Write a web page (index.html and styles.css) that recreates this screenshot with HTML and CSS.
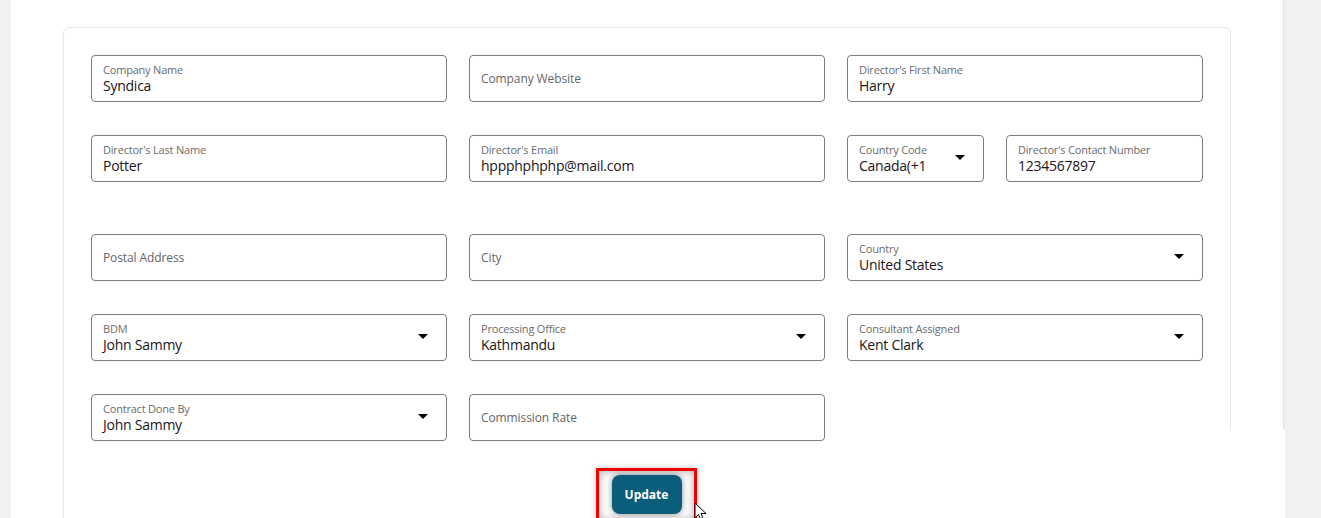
FILE: index.html
```html
<!DOCTYPE html>
<html lang="en">
<head>
<meta charset="utf-8">
<title>Company details</title>
<link rel="stylesheet" href="styles.css">
</head>
<body>
<div class="page">
  <main class="panel">
    <section class="card">
      <div class="row">
        <div class="field"><span class="label">Company Name</span><span class="value">Syndica</span></div>
        <div class="field empty"><span class="placeholder">Company Website</span></div>
        <div class="field"><span class="label">Director's First Name</span><span class="value">Harry</span></div>
      </div>
      <div class="row">
        <div class="field"><span class="label">Director's Last Name</span><span class="value">Potter</span></div>
        <div class="field"><span class="label">Director's Email</span><span class="value">hppphphphp@mail.com</span></div>
        <div class="split">
          <div class="field select code"><span class="label">Country Code</span><span class="value">Canada(+1</span><span class="caret"></span></div>
          <div class="field phone"><span class="label">Director's Contact Number</span><span class="value">1234567897</span></div>
        </div>
      </div>
      <div class="row spaced">
        <div class="field empty"><span class="placeholder">Postal Address</span></div>
        <div class="field empty"><span class="placeholder">City</span></div>
        <div class="field select"><span class="label">Country</span><span class="value">United States</span><span class="caret"></span></div>
      </div>
      <div class="row">
        <div class="field select"><span class="label">BDM</span><span class="value">John Sammy</span><span class="caret"></span></div>
        <div class="field select"><span class="label">Processing Office</span><span class="value">Kathmandu</span><span class="caret"></span></div>
        <div class="field select"><span class="label">Consultant Assigned</span><span class="value">Kent Clark</span><span class="caret"></span></div>
      </div>
      <div class="row">
        <div class="field select"><span class="label">Contract Done By</span><span class="value">John Sammy</span><span class="caret"></span></div>
        <div class="field empty"><span class="placeholder">Commission Rate</span></div>
      </div>
      <div class="actions">
        <div class="highlight">
          <button class="update" type="button">Update</button>
          <svg class="cursor" width="14" height="20" viewBox="0 0 14 20"><path d="M1 1 L1 16 L4.5 12.5 L7 18.5 L9.5 17.5 L7 11.5 L12 11.5 Z" fill="#fff" stroke="#000" stroke-width="1" stroke-linejoin="round"/></svg>
        </div>
      </div>
    </section>
  </main>
  <div class="patch"></div>
</div>
</body>
</html>
```

FILE: styles.css
```css
* { box-sizing: border-box; }
html, body { margin: 0; padding: 0; }
body {
  background: #f1f3f2;
  font-family: "Open Sans", "Noto Sans", sans-serif;
  height: 518px;
  overflow: hidden;
}
.page { position: relative; height: 518px; overflow: hidden; }
.panel {
  margin-left: 11px;
  width: 1273px;
  height: 518px;
  background: #fff;
  border-right: 1px solid #dfe3e3;
  padding: 27px 0 0 52px;
  overflow: hidden;
}
.card {
  width: 1168px;
  height: 500px;
  border: 1px solid #e6e6e6;
  border-radius: 6px;
  padding: 27px 27px 0 27px;
  display: flex;
  flex-direction: column;
  gap: 33px;
}
.row {
  display: grid;
  grid-template-columns: 356px 356px 356px;
  column-gap: 22px;
}
.row.spaced { margin-top: 19px; }
.split {
  display: grid;
  grid-template-columns: 137px 197px;
  column-gap: 22px;
}
.field {
  position: relative;
  height: 47px;
  border: 1px solid #7c7c7c;
  border-radius: 4px;
  padding: 7px 11px 0 11px;
  display: flex;
  flex-direction: column;
}
.label {
  font-size: 11px;
  line-height: 14px;
  color: #6b6b6b;
  letter-spacing: -0.2px;
}
.value {
  font-size: 14px;
  line-height: 18px;
  color: #1c1420;
  letter-spacing: -0.25px;
}
.field.empty { justify-content: center; padding-top: 0; padding-bottom: 0; }
.placeholder {
  font-size: 12px;
  color: #666;
  letter-spacing: -0.1px;
}
.caret {
  position: absolute;
  right: 18px;
  top: 19px;
  width: 0;
  height: 0;
  border-left: 5px solid transparent;
  border-right: 5px solid transparent;
  border-top: 5px solid #000;
}
.actions {
  display: flex;
  justify-content: center;
  margin-top: -6px;
}
.highlight {
  position: relative;
  width: 101px;
  height: 52px;
  border: 3px solid #f20000;
  border-bottom: none;
  box-shadow: inset 0 0 8px rgba(0,0,0,0.35), 0 0 6px rgba(0,0,0,0.25);
  display: flex;
  justify-content: center;
  padding-top: 4px;
  margin-left: -1px;
}
.update {
  width: 70px;
  height: 39px;
  border: none;
  border-radius: 8px;
  background: #0b5d7c;
  color: #fff;
  font-family: "Open Sans", "Noto Sans", sans-serif;
  font-weight: 700;
  font-size: 12px;
  box-shadow: 0 0 6px rgba(0,0,0,0.45);
}
.cursor {
  position: absolute;
  left: 95px;
  top: 31px;
}
.patch {
  position: absolute;
  left: 1200px;
  top: 429px;
  width: 85px;
  height: 89px;
  background: #fff;
}
```
